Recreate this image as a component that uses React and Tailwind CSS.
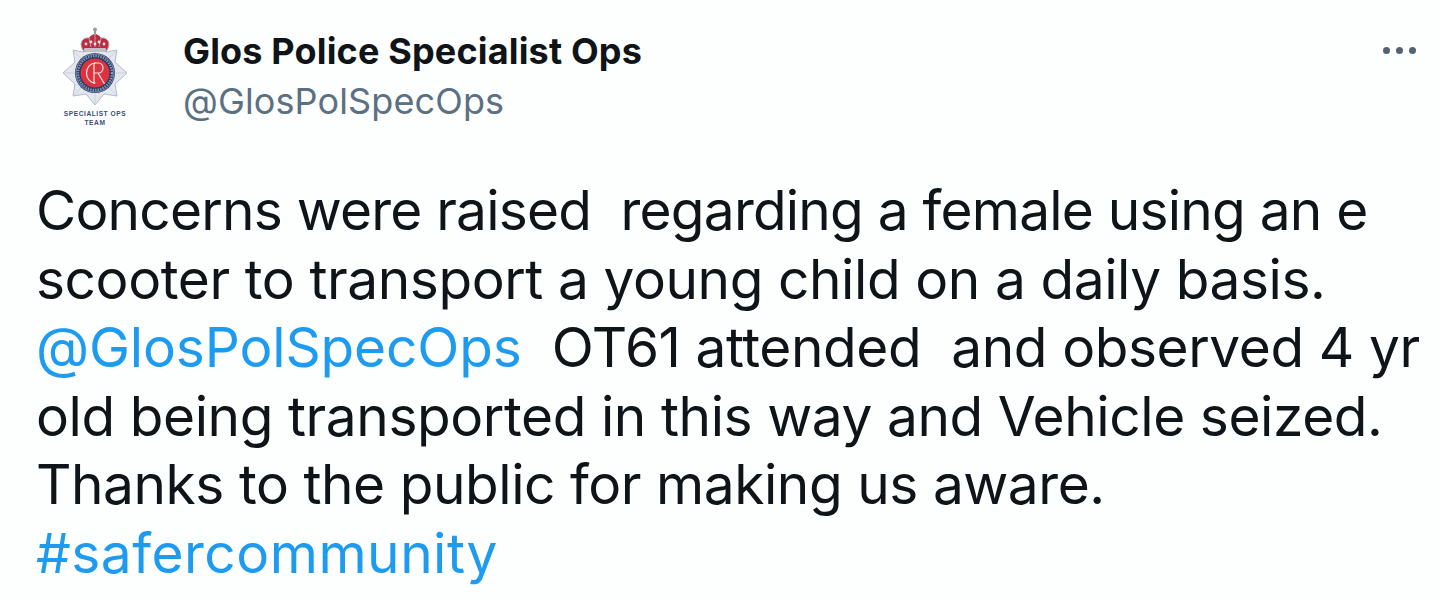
function Logo() {
  return (
    <div className="flex w-[100px] flex-col items-center">
      <svg width="72" height="79" viewBox="0 0 72 79" className="block">
        {/* star */}
        <polygon points="14,23 24,25 36,20 48,25 58,23 56,35 68,46 56,57 58,69 45,67 36,78 27,67 14,69 16,57 4,46 16,35" fill="#e4e7ee" stroke="#9aa4b6" strokeWidth="0.7" />
        <path d="M36 20 V78 M4 46 H68 M14 23 L58 69 M58 23 L14 69" stroke="#c3c9d6" strokeWidth="0.7" />
        {/* crown */}
        <path d="M25 25 C19 17 23 10 30 11 C32 8 34 7 36 7 C38 7 40 8 42 11 C49 10 53 17 47 25 Z" fill="#c02a40" />
        <path d="M25 24 C19 17 23 10 30 11 M47 24 C53 17 49 10 42 11 M36 7 V20 M30 11 L32 20 M42 11 L40 20" fill="none" stroke="#a9a6ab" strokeWidth="1" />
        <circle cx="27" cy="17" r="1.4" fill="#fff" opacity="0.85" />
        <circle cx="32" cy="15" r="1.4" fill="#fff" opacity="0.85" />
        <circle cx="36" cy="17" r="1.4" fill="#fff" opacity="0.85" />
        <circle cx="40" cy="15" r="1.4" fill="#fff" opacity="0.85" />
        <circle cx="45" cy="17" r="1.4" fill="#fff" opacity="0.85" />
        <rect x="25" y="21" width="22" height="4" rx="1" fill="#c2bfc6" />
        <circle cx="36" cy="2.5" r="2" fill="#9a9aa3" />
        <rect x="35" y="3" width="2" height="5" fill="#9a9aa3" />
        {/* badge */}
        <circle cx="36" cy="46" r="20" fill="#253a68" />
        <circle cx="36" cy="46" r="19" fill="none" stroke="#c9cfdc" strokeWidth="0.6" />
        <circle cx="36" cy="46" r="17" fill="none" stroke="#aeb8cc" strokeWidth="2.4" strokeDasharray="1.4 1.1" opacity="0.75" />
        <circle cx="36" cy="46" r="14.5" fill="#dc333f" />
        <path d="M36.5 36 A9 10 0 1 0 36.5 56" fill="none" stroke="#f7e3e4" strokeWidth="1.2" />
        <path d="M35 36 V57 M35 36 H39.5 A4.5 5 0 0 1 39.5 46 H35 M39 46 L45.5 57" fill="none" stroke="#f7e3e4" strokeWidth="1.2" />
      </svg>
      <div className="mt-[3px] text-center font-['Liberation_Sans',sans-serif] text-[6.6px] leading-[9px] font-bold tracking-[0.55px] text-[#3a4f78]">
        <div>SPECIALIST OPS</div>
        <div>TEAM</div>
      </div>
    </div>
  );
}

export default function App() {
  return (
    <div className="h-[600px] w-[1440px] overflow-hidden bg-[#fdfefe] pt-[27px] pl-[36px] font-['Inter',sans-serif] text-[#0f1419]">
      <header className="flex items-start">
        <div className="ml-[9px] w-[138px]">
          <Logo />
        </div>
        <div className="flex-1 pt-[3px]">
          <div className="text-[36px] leading-[42px] font-bold tracking-[0.16px]">Glos Police Specialist Ops</div>
          <div className="mt-[8px] text-[36px] leading-[42px] tracking-[0.13px] text-[#5b7083]">@GlosPolSpecOps</div>
        </div>
        <div className="mt-[20px] mr-[24px] flex gap-[6px]">
          <span className="h-[7px] w-[7px] rounded-full bg-[#536471]" />
          <span className="h-[7px] w-[7px] rounded-full bg-[#536471]" />
          <span className="h-[7px] w-[7px] rounded-full bg-[#536471]" />
        </div>
      </header>
      <main className="mt-[49px] text-[55px] leading-[68.6px] tracking-[-0.42px] whitespace-pre">
        <div className="tracking-[-0.78px]">Concerns were raised  regarding a female using an e</div>
        <div>scooter to transport a young child on a daily basis.</div>
        <div><span className="tracking-[-0.15px] text-[#1d9bf0]">@GlosPolSpecOps</span>  OT61 attended  and observed 4 yr</div>
        <div>old being transported in this way and Vehicle seized.</div>
        <div className="tracking-[-0.45px]">Thanks to the public for making us aware.</div>
        <div className="tracking-[0.5px] text-[#1d9bf0]">#safercommunity</div>
      </main>
    </div>
  );
}
